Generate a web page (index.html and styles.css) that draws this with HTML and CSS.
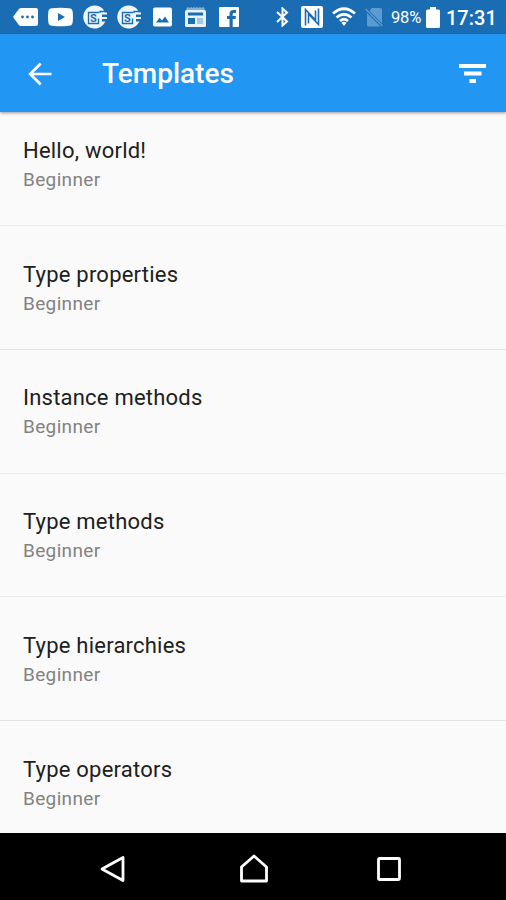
FILE: index.html
```html
<!DOCTYPE html>
<html lang="en">
<head>
<meta charset="utf-8">
<title>Templates</title>
<link rel="stylesheet" href="styles.css">
</head>
<body>
<div class="screen">
  <div class="status">
    <div class="notifications">
      <svg width="25" height="20" viewBox="0 0 25 20"><path fill="#fff" d="M8 1H23Q25 1 25 3V17Q25 19 23 19H8Q6.500 19 5.500 17.500L.5 10.700Q0 10 .5 9.300L5.500 2.500Q6.500 1 8 1Z"/><g fill="#1b6db3"><circle cx="9.500" cy="10" r="1.400"/><circle cx="14.500" cy="10" r="1.400"/><circle cx="19.500" cy="10" r="1.400"/></g></svg>
      <svg width="25" height="20" viewBox="0 0 25 20"><path fill="#fff" d="M4 1.200Q12.500.2 21 1.200Q24.500 1.500 24.700 5Q25.200 10 24.700 15Q24.500 18.500 21 18.800Q12.500 19.800 4 18.800Q.5 18.500.3 15Q-.2 10 .3 5Q.5 1.500 4 1.200Z"/><path fill="#1b6db3" d="M10 6L17 10L10 14Z"/></svg>
      <svg class="seal" width="24" height="24" viewBox="0 0 24 24"><path fill="#f0f7fc" d="M12 .5A11.500 11.500 0 0 1 20 4L22 7.500H24V9.500H19V12H24V14H19V16.500H22.500L20 20A11.500 11.500 0 1 1 12 .5Z"/><path stroke="#1b6db3" stroke-width="1.400" fill="none" d="M16 7.500H5.500V18.500H15.500V13.500M17 8V6.500H22"/><text x="7" y="17" class="seal-letter">S</text></svg>
      <svg class="seal" width="24" height="24" viewBox="0 0 24 24"><path fill="#f0f7fc" d="M12 .5A11.500 11.500 0 0 1 20 4L22 7.500H24V9.500H19V12H24V14H19V16.500H22.500L20 20A11.500 11.500 0 1 1 12 .5Z"/><path stroke="#1b6db3" stroke-width="1.400" fill="none" d="M16 7.500H5.500V18.500H15.500V13.500M17 8V6.500H22"/><text x="7" y="17" class="seal-letter">S</text></svg>
      <svg class="photo" width="19" height="20" viewBox="0 0 19 20"><rect y=".5" width="19" height="19" rx="2" fill="#fff"/><path fill="#1b6db3" d="M3 15.500L6.500 10.800L9 13.500L12 9.500L16 15.500Z"/></svg>
      <svg class="news" width="21" height="20" viewBox="0 0 21 20"><path fill="#fff" d="M1.500 1L3 0L4.500 1L6 0L7.500 1L9 0L10.500 1L12 0L13.500 1L15 0L16.500 1L18 0L19.500 1V4H1.500Z" opacity=".45"/><rect y="3" width="21" height="17" rx="1.500" fill="#e8f2fa"/><path fill="#1b6db3" d="M3 5.500H18V8.500H3ZM3 11H10V17H3Z"/><path fill="#a6c8e6" d="M12 11H18V17H12Z"/></svg>
      <svg class="fb" width="20" height="20" viewBox="0 0 20 20"><rect width="20" height="20" rx="1" fill="#fff"/><path fill="#1b6db3" d="M10.500 20V12H8V9H10.500V7Q10.500 3 14.500 3H17V6H15Q13.700 6 13.700 7.300V9H17L16.500 12H13.700V20Z"/></svg>
    </div>
    <div class="system">
      <svg width="13" height="20" viewBox="0 0 13 20"><path fill="none" stroke="#fff" stroke-width="2" d="M1 5L11 14.500L6.500 18.500V1.500L11 5.500L1 15"/></svg>
      <svg class="nfc" width="22" height="22" viewBox="0 0 22 22"><rect width="22" height="22" rx="2" fill="#fff"/><path fill="none" stroke="#1b6db3" stroke-width="1.600" d="M4.500 19.500V3.500L14.500 14V4.500M7.500 17.500V8L17.500 18.500V2.500"/></svg>
      <svg class="wifi" width="24" height="20" viewBox="0 0 24 20"><g fill="none" stroke="#fff" stroke-width="2.700"><path d="M1 6.500Q12-3 23 6.500M4.500 10.500Q12 4 19.500 10.500M8 14Q12 10.500 16 14"/></g><path fill="#fff" d="M9.500 15.700Q12 13.700 14.500 15.700L12 19Z"/></svg>
      <svg class="sim" width="18" height="20" viewBox="0 0 18 20"><path fill="#5c9bcf" d="M6.500 1H15.500Q17 1 17 2.500V16.500L4.500 4ZM2 6L15.500 19.500H3.500Q2 19.500 2 18Z"/><path stroke="#5c9bcf" stroke-width="1.500" d="M.5 2L17.500 19"/></svg>
      <span class="percent">98%</span>
      <svg class="battery" width="14" height="21" viewBox="0 0 14 21"><path fill="#fff" d="M4 0H10V2.500H12.500Q14 2.500 14 4V19.500Q14 21 12.500 21H1.500Q0 21 0 19.500V4Q0 2.500 1.500 2.500H4Z"/></svg>
      <span class="clock">17:31</span>
    </div>
  </div>
  <header class="appbar">
    <svg width="24" height="24" viewBox="0 0 24 24"><path fill="none" stroke="#fff" stroke-width="2.700" d="M23.500 12H3M12.700 1.500L2.200 12L12.700 22.500"/></svg>
    <h1>Templates</h1>
    <svg class="filter" width="27" height="20" viewBox="0 0 27 20"><path fill="#fff" d="M0 0H27V4H0ZM5 7.500H22.500V11.500H5ZM10.500 15H17V19H10.500Z"/></svg>
  </header>
  <main class="list">
    <div class="row first soft"><div class="name">Hello, world!</div><div class="level">Beginner</div></div>
    <div class="row"><div class="name">Type properties</div><div class="level">Beginner</div></div>
    <div class="row soft"><div class="name">Instance methods</div><div class="level">Beginner</div></div>
    <div class="row soft"><div class="name">Type methods</div><div class="level">Beginner</div></div>
    <div class="row"><div class="name">Type hierarchies</div><div class="level">Beginner</div></div>
    <div class="row"><div class="name">Type operators</div><div class="level">Beginner</div></div>
  </main>
  <nav class="navbar">
    <svg width="28" height="30" viewBox="0 0 28 30"><path fill="none" stroke="#fff" stroke-width="2.800" stroke-linejoin="round" d="M24 3.500V26.500L3 15Z"/></svg>
    <svg class="home" width="30" height="30" viewBox="0 0 30 30"><path fill="none" stroke="#fff" stroke-width="2.800" stroke-linejoin="round" d="M2.500 13L15 2L27.500 13V27H2.500Z"/></svg>
    <svg width="26" height="26" viewBox="0 0 26 26"><rect x="2.500" y="2.500" width="21" height="21" rx="1" fill="none" stroke="#fff" stroke-width="2.800"/></svg>
  </nav>
</div>
</body>
</html>
```
FILE: styles.css
```css
body {
  margin: 0;
  font-family: Roboto, "Liberation Sans", sans-serif;
}

.screen {
  display: flex;
  flex-direction: column;
  width: 506px;
  height: 900px;
  overflow: hidden;
  background: #fafafa;
}

svg {
  display: block;
  flex: none;
}

.status {
  display: flex;
  flex: none;
  justify-content: space-between;
  box-sizing: border-box;
  height: 34px;
  padding: 0 10px 0 13px;
  background: #1b6db3;
  color: #fff;
}

.notifications,
.system {
  display: flex;
  align-items: center;
}

.notifications svg + svg { margin-left: 10px; }
.notifications svg + .photo { margin-left: 12px; }
.notifications svg + .news { margin-left: 13px; }
.notifications svg + .fb { margin-left: 13px; }

.seal-letter {
  font: 700 11px Roboto, sans-serif;
  fill: #1b6db3;
}

.nfc { margin-left: 12px; }
.wifi { margin-left: 9px; }
.sim { margin-left: 9px; }

.percent {
  box-sizing: border-box;
  width: 35px;
  margin-left: 8px;
  padding-top: 2px;
  font-size: 16.500px;
  letter-spacing: -.2px;
  line-height: 34px;
}

.clock {
  width: 50px;
  margin-left: 6px;
  padding-top: 2px;
  font-size: 20px;
  font-weight: 500;
  line-height: 34px;
  white-space: nowrap;
}

.appbar {
  position: relative;
  display: flex;
  flex: none;
  align-items: center;
  box-sizing: border-box;
  height: 78px;
  padding: 1px 20px 0 28px;
  background: #2196f3;
  color: #fff;
  box-shadow: 0 1px 3px rgba(0, 0, 0, .4);
}

.appbar h1 {
  margin: 1px 0 0 50px;
  font-size: 28px;
  font-weight: 500;
  line-height: 36px;
}

.filter { margin-left: auto; }

.list {
  flex: 1;
  min-height: 0;
  overflow: hidden;
}

.row {
  box-sizing: border-box;
  height: 123.75px;
  padding: 34.500px 23px 0;
  border-bottom: 1px solid #e2e2e2;
}

.row.soft {
  border-bottom-color: #ededed;
}

.row.first {
  height: 114px;
  padding-top: 25px;
}

.name {
  color: #202020;
  font-size: 22px;
  line-height: 28px;
  letter-spacing: .22px;
}

.level {
  color: #828282;
  font-size: 19px;
  line-height: 30px;
  letter-spacing: .35px;
}

.navbar {
  display: flex;
  flex: none;
  align-items: center;
  justify-content: space-between;
  box-sizing: border-box;
  height: 67px;
  padding: 4px 104px 0 99px;
  background: #000;
}

.home { margin-left: 4px; }
```
